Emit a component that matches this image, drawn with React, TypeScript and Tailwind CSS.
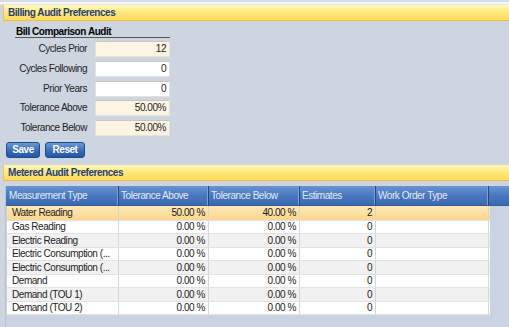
import React from 'react';

const inputs = [
    { label: 'Cycles Prior', value: '12', tinted: true },
    { label: 'Cycles Following', value: '0', tinted: false },
    { label: 'Prior Years', value: '0', tinted: false },
    { label: 'Tolerance Above', value: '50.00%', tinted: true },
    { label: 'Tolerance Below', value: '50.00%', tinted: true },
];

const columns = [
    { title: 'Measurement Type', w: 'w-[112px]' },
    { title: 'Tolerance Above', w: 'w-[90px]' },
    { title: 'Tolerance Below', w: 'w-[91px]' },
    { title: 'Estimates', w: 'w-[76px]' },
    { title: 'Work Order Type', w: 'w-[113px]' },
];

const rows = [
    { name: 'Water Reading', above: '50.00 %', below: '40.00 %', est: '2', h: 'h-[15px]' },
    { name: 'Gas Reading', above: '0.00 %', below: '0.00 %', est: '0', h: 'h-[13px]' },
    { name: 'Electric Reading', above: '0.00 %', below: '0.00 %', est: '0', h: 'h-[14px]' },
    { name: 'Electric Consumption (...', above: '0.00 %', below: '0.00 %', est: '0', h: 'h-[13px]' },
    { name: 'Electric Consumption (...', above: '0.00 %', below: '0.00 %', est: '0', h: 'h-[14px]' },
    { name: 'Demand', above: '0.00 %', below: '0.00 %', est: '0', h: 'h-[13px]' },
    { name: 'Demand (TOU 1)', above: '0.00 %', below: '0.00 %', est: '0', h: 'h-[14px]' },
    { name: 'Demand (TOU 2)', above: '0.00 %', below: '0.00 %', est: '0', h: 'h-[13px]' },
];

function SectionHeader({ title }: { title: string }) {
    return (
        <div className="ml-[3px] h-[16px] flex items-center pl-[4px] border-l border-[#f2c45a] border-b border-b-[#f5bd3c] bg-gradient-to-b from-[#fff7b8] via-[#ffe97a] to-[#ffd95a] font-bold text-[#1e3f78] leading-none whitespace-nowrap">
            {title}
        </div>
    );
}

function Button({ label, w }: { label: string; w: string }) {
    return (
        <div className={`${w} h-[16px] flex items-center justify-center rounded-[3px] border border-[#1f4a8e] bg-gradient-to-b from-[#6b98d8] via-[#3b6ebc] to-[#2356a5] text-white font-bold leading-none`}>
            {label}
        </div>
    );
}

export default function App() {
    return (
        <div className="w-[509px] h-[327px] overflow-hidden bg-[#cdd5e1] text-[10px] tracking-[-0.45px] leading-none text-[#1c1c1c] font-['Liberation_Sans',Arial,sans-serif]">
            {/* top strip */}
            <div className="h-[2px] bg-[#d6dce7]" />
            <div className="h-[2px] bg-[#f5f7fa]" />
            <div className="h-[1px] bg-[#e3e8f0]" />

            <SectionHeader title="Billing Audit Preferences" />

            {/* Bill comparison form */}
            <div className="pl-[15px] pt-[5px]">
                <div className="w-[155px] h-[12px] leading-[11px] pl-[1px] border-b border-[#555] font-bold text-black whitespace-nowrap">
                    Bill Comparison Audit
                </div>
                <div className="mt-[3px] flex flex-col gap-[3.75px]">
                    {inputs.map(f => (
                        <div key={f.label} className="flex items-center">
                            <div className="w-[72px] flex justify-end whitespace-nowrap text-[#222]">{f.label}</div>
                            <div
                                className={`ml-[8px] w-[75px] h-[16px] flex items-center justify-end pr-[3px] border border-[#e6e2da] border-t-[#c9c5bd] ${f.tinted ? 'bg-[#fdf4e4]' : 'bg-white'}`}
                            >
                                {f.value}
                            </div>
                        </div>
                    ))}
                </div>
            </div>

            {/* Buttons */}
            <div className="mt-[6px] ml-[6px] flex gap-[5px]">
                <Button label="Save" w="w-[34px]" />
                <Button label="Reset" w="w-[40px]" />
            </div>

            <div className="mt-[7px]">
                <SectionHeader title="Metered Audit Preferences" />
            </div>

            {/* Grid */}
            <div className="mt-[5px] ml-[5px] h-[200px] border-l border-[#b8c3d3] bg-[#c9d3e1]">
                <div className="flex h-[20px] bg-gradient-to-b from-[#6a94d0] via-[#4a78c0] to-[#3a68b2] border-b border-[#2f5a9c]">
                    <div className="w-[1px]" />
                    {columns.map(c => (
                        <div
                            key={c.title}
                            className={`${c.w} flex items-center pl-[2px] text-[#e4ebf6] whitespace-nowrap border-r border-[#24477f] shadow-[inset_-1px_0_0_#7fa2d6]`}
                        >
                            {c.title}
                        </div>
                    ))}
                    <div className="flex-1" />
                </div>
                {rows.map((r, i) => {
                    const bg = i === 0
                        ? 'bg-gradient-to-b from-[#fee9b8] to-[#fbd68c]'
                        : i % 2 === 0
                            ? 'bg-[#f1f1f1]'
                            : 'bg-white';
                    return (
                        <div key={i} className={`flex w-[483px] ml-[1px] ${r.h} ${bg} border-b border-[#e2e2e2]`}>
                            <div className="w-[112px] flex items-center pl-[5px] border-r border-[#d6d6d6] whitespace-nowrap overflow-hidden">
                                {r.name}
                            </div>
                            <div className="w-[90px] flex items-center justify-end pr-[3px] border-r border-[#d6d6d6]">{r.above}</div>
                            <div className="w-[91px] flex items-center justify-end pr-[3px] border-r border-[#d6d6d6]">{r.below}</div>
                            <div className="w-[76px] flex items-center justify-end pr-[3px] border-r border-[#d6d6d6]">{r.est}</div>
                            <div className="w-[113px] border-r border-[#d6d6d6]" />
                        </div>
                    );
                })}
            </div>
        </div>
    );
}
